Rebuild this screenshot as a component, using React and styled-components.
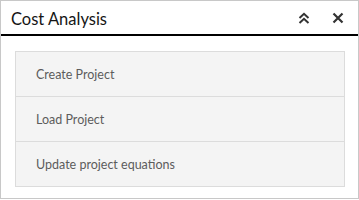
import React from "react";
import styled, { createGlobalStyle } from "styled-components";

const GlobalStyle = createGlobalStyle`
  html, body {
    margin: 0;
    padding: 0;
    background: #fff;
  }
  body {
    font-family: "Lato", "Open Sans", sans-serif;
  }
`;

const Panel = styled.div`
  width: 359px;
  height: 199px;
  box-sizing: border-box;
  border: 1px solid #c8c8c8;
  background: #fff;
  display: flex;
  flex-direction: column;
`;

const Header = styled.div`
  height: 33px;
  display: flex;
  align-items: center;
  padding: 0 8px 0 10px;
  border-bottom: 2px solid #000;
  flex-shrink: 0;
`;

const Title = styled.h1`
  flex: 1;
  margin: 0;
  font-size: 16.5px;
  font-weight: 400;
  color: #151515;
  padding-top: 2px;
`;

const IconButton = styled.button`
  width: 24px;
  height: 24px;
  margin-left: ${(p) => p.gap || 0}px;
  padding: 0;
  border: none;
  background: none;
  display: flex;
  align-items: center;
  justify-content: center;
  color: #333;
`;

const Body = styled.div`
  flex: 1;
  padding: 15px 13px 0 14px;
`;

const List = styled.ul`
  list-style: none;
  margin: 0;
  padding: 0;
  border: 1px solid #dcdcdc;
  background: #f4f4f4;
`;

const Item = styled.li`
  height: 44px;
  display: flex;
  align-items: center;
  padding-left: 20px;
  font-size: 12.5px;
  color: #5c5c5c;
  border-top: ${(p) => (p.first ? "none" : "1px solid #dcdcdc")};
`;

const items = ["Create Project", "Load Project", "Update project equations"];

export default function App() {
  return (
    <>
      <GlobalStyle />
      <Panel>
        <Header>
          <Title>Cost Analysis</Title>
          <IconButton aria-label="Collapse">
            <svg width="14" height="14" viewBox="0 0 14 14" fill="none" stroke="#333" strokeWidth="2">
              <path d="M2.5 7 L7 2.8 L11.5 7" />
              <path d="M2.5 12 L7 7.8 L11.5 12" />
            </svg>
          </IconButton>
          <IconButton aria-label="Close" gap={10}>
            <svg width="12" height="12" viewBox="0 0 12 12" fill="none" stroke="#333" strokeWidth="2.2">
              <path d="M1.5 1.5 L10.5 10.5 M10.5 1.5 L1.5 10.5" />
            </svg>
          </IconButton>
        </Header>
        <Body>
          <List>
            {items.map((label, i) => (
              <Item key={label} first={i === 0}>
                {label}
              </Item>
            ))}
          </List>
        </Body>
      </Panel>
    </>
  );
}
